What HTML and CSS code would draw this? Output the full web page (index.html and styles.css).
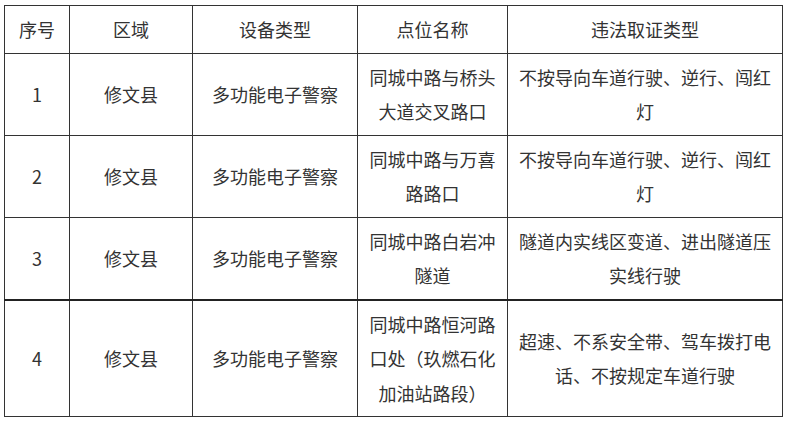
FILE: index.html
```html
<!DOCTYPE html>
<html lang="zh-CN">
<head>
<meta charset="utf-8">
<title>电子警察点位</title>
<link rel="stylesheet" href="styles.css">
</head>
<body>
<table class="grid">
  <colgroup>
    <col class="c1"><col class="c2"><col class="c3"><col class="c4"><col class="c5">
  </colgroup>
  <tr class="head">
    <td>序号</td><td>区域</td><td>设备类型</td><td>点位名称</td><td>违法取证类型</td>
  </tr>
  <tr>
    <td>1</td><td>修文县</td><td>多功能电子警察</td><td>同城中路与桥头大道交叉路口</td><td>不按导向车道行驶、逆行、闯红灯</td>
  </tr>
  <tr>
    <td>2</td><td>修文县</td><td>多功能电子警察</td><td>同城中路与万喜路路口</td><td>不按导向车道行驶、逆行、闯红灯</td>
  </tr>
  <tr class="thick">
    <td>3</td><td>修文县</td><td>多功能电子警察</td><td>同城中路白岩冲隧道</td><td>隧道内实线区变道、进出隧道压实线行驶</td>
  </tr>
  <tr>
    <td>4</td><td>修文县</td><td>多功能电子警察</td><td>同城中路恒河路口处（玖燃石化加油站路段）</td><td>超速、不系安全带、驾车拨打电话、不按规定车道行驶</td>
  </tr>
</table>
</body>
</html>
```
FILE: styles.css
```css
html, body {
  margin: 0;
  background: #ffffff;
}
body {
  padding: 5px 0 0 4px;
  font-family: "Noto Sans CJK SC", "Microsoft YaHei", sans-serif;
  color: #333333;
}
.grid {
  border-collapse: collapse;
  table-layout: fixed;
  width: 778px;
}
.c1 { width: 65px; }
.c2 { width: 123px; }
.c3 { width: 165px; }
.c4 { width: 150px; }
.c5 { width: 275px; }
.grid td {
  border: 1px solid #333333;
  padding: 6px 10px;
  font-size: 18px;
  line-height: 34.5px;
  text-align: center;
  vertical-align: middle;
  word-break: break-all;
}
.grid .thick td {
  border-bottom: 2px solid #222222;
}
```
